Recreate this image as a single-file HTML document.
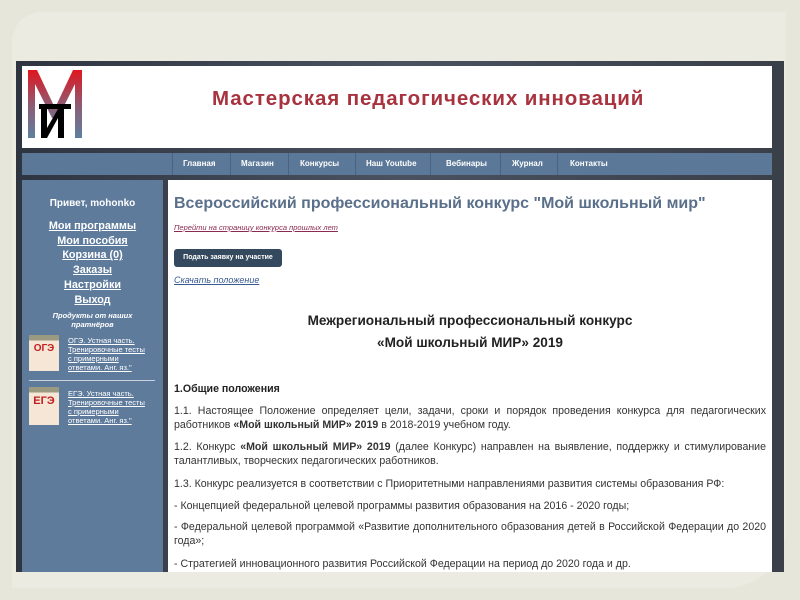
<!DOCTYPE html>
<html><head><meta charset="utf-8"><style>
*{margin:0;padding:0;box-sizing:border-box}
body{width:800px;height:600px;background:#e6e6da;font-family:"Liberation Sans",sans-serif;position:relative;overflow:hidden}
.panel{position:absolute;left:12px;top:12px;width:774px;height:576px;background:#ecebe2;border-radius:30px 0 60px 0}
.frame{position:absolute;left:16px;top:61px;width:768px;height:511px;background:linear-gradient(90deg,#2f3540,#4a5260 50%,#3a3f48)}
.hdr{position:absolute;left:22px;top:66px;width:750px;height:82px;background:#fff}
.title{position:absolute;font-size:20.5px;font-weight:bold;color:#a8323e;letter-spacing:0.9px;white-space:nowrap}
.nav{position:absolute;left:22px;top:153px;width:750px;height:22px;background:#5b7898}
.nav span{position:absolute;top:6px;font-size:8px;font-weight:bold;color:#fff}
.nav i{position:absolute;top:0;width:1px;height:22px;background:#4a6382}
.side{position:absolute;left:22px;top:180px;width:141px;height:392px;background:#5e7b9c;color:#fff;text-align:center}
.side .h{font-size:10px;font-weight:bold;margin-top:18px}
.side .l{font-size:10.8px;font-weight:bold;text-decoration:underline;line-height:14.7px}
.cont{position:absolute;left:168px;top:180px;width:604px;height:392px;background:#fff;overflow:hidden}
p{position:absolute;left:6px;width:592px;font-size:10.6px;color:#333;text-align:justify;line-height:14px}
</style></head><body>
<div class="panel"></div>
<div class="frame"></div>
<div class="hdr">
<svg width="54" height="68" style="position:absolute;left:6px;top:4px" viewBox="0 0 54 68">
<defs><linearGradient id="g" x1="0" y1="0" x2="0" y2="1"><stop offset="0" stop-color="#e0161e"/><stop offset="0.55" stop-color="#8a5f78"/><stop offset="1" stop-color="#5f7fa0"/></linearGradient></defs>
<path d="M0 0h9l18 38 18-38h9v68h-7V14L30 48h-6L7 14v54H0z" fill="url(#g)"/>
<rect x="11" y="34" width="32" height="5" fill="#000"/>
<path d="M13 39h6v19l11-19h6v29h-6V48L19 68h-6z" fill="#000"/>
</svg>
<div class="title" style="left:190px;top:21px">Мастерская педагогических инноваций</div>
</div>
<div class="nav">
<i style="left:150px"></i><span style="left:161px">Главная</span><i style="left:208px"></i>
<span style="left:219px">Магазин</span><i style="left:266px"></i>
<span style="left:278px">Конкурсы</span><i style="left:333px"></i>
<span style="left:344px">Наш Youtube</span><i style="left:408px"></i>
<span style="left:424px">Вебинары</span><i style="left:478px"></i>
<span style="left:490px">Журнал</span><i style="left:535px"></i>
<span style="left:548px">Контакты</span>
</div>
<div class="side">
<div class="h">Привет, mohonko</div>
<div style="margin-top:10px">
<div class="l">Мои программы</div><div class="l">Мои пособия</div><div class="l">Корзина (0)</div><div class="l">Заказы</div><div class="l">Настройки</div><div class="l">Выход</div>
</div>
<div style="font-size:7.5px;font-style:italic;font-weight:bold;margin-top:4px;line-height:9px">Продукты от наших<br>пратнёров</div>
<div style="position:absolute;left:7px;top:155px;width:30px;height:36px;background:linear-gradient(#9a9a80 0 15%,#f6e6d6 15%)"><div style="color:#c02020;font-weight:bold;font-size:10px;margin-top:8px">ОГЭ</div></div>
<div style="position:absolute;left:46px;top:156px;text-align:left;font-size:7.5px;line-height:9px;text-decoration:underline">ОГЭ. Устная часть.<br>Тренировочные тесты<br>с примерными<br>ответами. Анг. яз."</div>
<div style="position:absolute;left:7px;top:200px;width:126px;height:1px;background:#c8d2de"></div>
<div style="position:absolute;left:7px;top:207px;width:30px;height:38px;background:linear-gradient(#9a9a80 0 15%,#f6e6d6 15%)"><div style="color:#c02020;font-weight:bold;font-size:11px;margin-top:8px">ЕГЭ</div></div>
<div style="position:absolute;left:46px;top:209px;text-align:left;font-size:7.5px;line-height:9px;text-decoration:underline">ЕГЭ. Устная часть.<br>Тренировочные тесты<br>с примерными<br>ответами. Анг. яз."</div>
</div>
<div class="cont">
<div style="position:absolute;left:6px;top:15px;font-size:16px;font-weight:bold;color:#5a6f8a;white-space:nowrap">Всероссийский профессиональный конкурс "Мой школьный мир"</div>
<div style="position:absolute;left:6px;top:43px;font-size:7.5px;font-style:italic;color:#8a2a50;text-decoration:underline">Перейти на страницу конкурса прошлых лет</div>
<div style="position:absolute;left:6px;top:69px;width:108px;height:18px;background:#34495e;border-radius:3px;color:#fff;font-size:7px;font-weight:bold;line-height:18px;text-align:center">Подать заявку на участие</div>
<div style="position:absolute;left:6px;top:95px;font-size:9px;font-style:italic;color:#3a5a90;text-decoration:underline">Скачать положение</div>
<div style="position:absolute;left:0;width:604px;top:133px;text-align:center;font-size:13.6px;font-weight:bold;color:#222">Межрегиональный профессиональный конкурс</div>
<div style="position:absolute;left:0;width:604px;top:155px;text-align:center;font-size:13.6px;font-weight:bold;color:#222">«Мой школьный МИР» 2019</div>
<p style="top:202px;font-weight:bold;color:#222">1.Общие положения</p>
<p style="top:224px">1.1. Настоящее Положение определяет цели, задачи, сроки и порядок проведения конкурса для педагогических работников <b>«Мой школьный МИР» 2019</b> в 2018-2019 учебном году.</p>
<p style="top:260px">1.2. Конкурс <b>«Мой школьный МИР» 2019</b> (далее Конкурс) направлен на выявление, поддержку и стимулирование талантливых, творческих педагогических работников.</p>
<p style="top:297px">1.3. Конкурс реализуется в соответствии с Приоритетными направлениями развития системы образования РФ:</p>
<p style="top:319px">- Концепцией федеральной целевой программы развития образования на 2016 - 2020 годы;</p>
<p style="top:340px">- Федеральной целевой программой «Развитие дополнительного образования детей в Российской Федерации до 2020 года»;</p>
<p style="top:377px">- Стратегией инновационного развития Российской Федерации на период до 2020 года и др.</p>
</div>
</body></html>
